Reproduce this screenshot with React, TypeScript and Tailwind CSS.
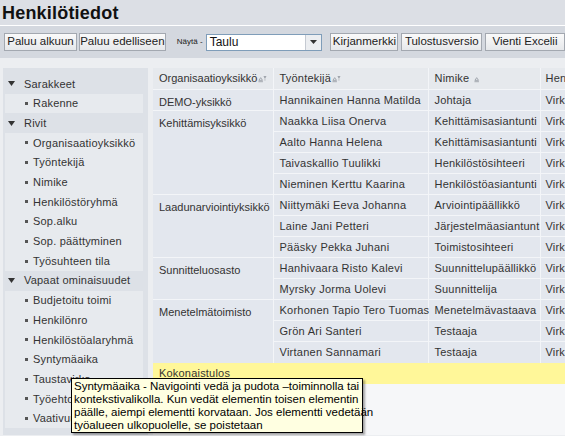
import React from 'react'

type Row = { emp: string; title: string; kind: string }
type Group = { unit: string; rows: Row[] }

const groups: Group[] = [
  { unit: 'DEMO-yksikkö', rows: [{ emp: 'Hannikainen Hanna Matilda', title: 'Johtaja', kind: 'Virka' }] },
  {
    unit: 'Kehittämisyksikkö',
    rows: [
      { emp: 'Naakka Liisa Onerva', title: 'Kehittämisasiantunti', kind: 'Virka' },
      { emp: 'Aalto Hanna Helena', title: 'Kehittämisasiantunti', kind: 'Virka' },
      { emp: 'Taivaskallio Tuulikki', title: 'Henkilöstösihteeri', kind: 'Virka' },
      { emp: 'Nieminen Kerttu Kaarina', title: 'Henkilöstöasiantunti', kind: 'Virka' },
    ],
  },
  {
    unit: 'Laadunarviointiyksikkö',
    rows: [
      { emp: 'Niittymäki Eeva Johanna', title: 'Arviointipäällikkö', kind: 'Virka' },
      { emp: 'Laine Jani Petteri', title: 'Järjestelmäasiantunt', kind: 'Virka' },
      { emp: 'Pääsky Pekka Juhani', title: 'Toimistosihteeri', kind: 'Virka' },
    ],
  },
  {
    unit: 'Sunnitteluosasto',
    rows: [
      { emp: 'Hanhivaara Risto Kalevi', title: 'Suunnittelupäällikkö', kind: 'Virka' },
      { emp: 'Myrsky Jorma Uolevi', title: 'Suunnittelija', kind: 'Virka' },
    ],
  },
  {
    unit: 'Menetelmätoimisto',
    rows: [
      { emp: 'Korhonen Tapio Tero Tuomas', title: 'Menetelmävastaava', kind: 'Virka' },
      { emp: 'Grön Ari Santeri', title: 'Testaaja', kind: 'Virka' },
      { emp: 'Virtanen Sannamari', title: 'Testaaja', kind: 'Virka' },
    ],
  },
]

const sections = [
  { name: 'Sarakkeet', items: ['Rakenne'] },
  {
    name: 'Rivit',
    items: ['Organisaatioyksikkö', 'Työntekijä', 'Nimike', 'Henkilöstöryhmä', 'Sop.alku', 'Sop. päättyminen', 'Työsuhteen tila'],
  },
  {
    name: 'Vapaat ominaisuudet',
    items: ['Budjetoitu toimi', 'Henkilönro', 'Henkilöstöalaryhmä', 'Syntymäaika', 'Taustavirka', 'Työehtosopimus', 'Vaativuusryhmä'],
  },
]

function SortIcon({ filter = true }: { filter?: boolean }) {
  return (
    <svg width="9" height="8" viewBox="0 0 10 8" className="ml-[1px] inline-block">
      <path d="M1 5.5 L3 2.5 L5 5.5 Z" fill="none" stroke="#8a8f98" strokeWidth="0.8" />
      <line x1="0.5" y1="7" x2="5.5" y2="7" stroke="#8a8f98" strokeWidth="0.8" />
      {filter && <path d="M6 1 H9.5 L8 3 V6 H7.5 V3 Z" fill="#8a8f98" />}
    </svg>
  )
}

function Btn({ label, w }: { label: string; w: string }) {
  return (
    <button
      className={`${w} h-[18px] shrink-0 border border-[#a3a8b0] bg-gradient-to-b from-[#fafafa] to-[#e6e8eb] text-[11.5px] text-[#222] leading-none px-0`}
    >
      {label}
    </button>
  )
}

export default function App() {
  return (
    <div className="relative w-[565px] h-[436px] overflow-hidden bg-[#eceef1] font-['Liberation_Sans',Arial,sans-serif] text-[#333]">
      {/* Title */}
      <div className="h-[26px] bg-[#dcdfe5] px-[2px] text-[18px] font-bold leading-[26px] text-[#111] tracking-[0.2px] border-b border-white">
        Henkilötiedot
      </div>

      {/* Toolbar */}
      <div className="h-[32px] bg-[#d4d8df] flex items-center pl-[4px] whitespace-nowrap">
        <Btn label="Paluu alkuun" w="w-[73px]" />
        <div className="w-[2px]" />
        <Btn label="Paluu edelliseen" w="w-[87px]" />
        <span className="ml-[11px] text-[8px] text-[#222] mr-[3px]">Näytä -</span>
        <div className="flex h-[17px] w-[127px] border border-[#7f9db9] bg-white">
          <span className="flex-1 text-[12px] leading-[15px] pl-[3px] text-[#111]">Taulu</span>
          <span className="w-[16px] flex items-center justify-center bg-[#eceef1] border-l border-[#c5cad2]">
            <svg width="7" height="4" viewBox="0 0 7 4"><path d="M0 0 H7 L3.5 4 Z" fill="#333" /></svg>
          </span>
        </div>
        <div className="w-[9px]" />
        <Btn label="Kirjanmerkki" w="w-[68px]" />
        <div className="w-[3px]" />
        <Btn label="Tulostusversio" w="w-[81px]" />
        <div className="w-[3px]" />
        <Btn label="Vienti Excelii" w="w-[80px]" />
      </div>

      {/* Main */}
      <div className="flex pt-[10px] pl-[3px] gap-[5px] h-[377px]">
        {/* Sidebar */}
        <div className="w-[145px] shrink-0 bg-[#dde1e7] pt-[6px] text-[11px]">
          {sections.map(s => (
            <div key={s.name}>
              <div className="h-[19.7px] flex items-center pl-[5px]">
                <svg width="7" height="5" viewBox="0 0 7 5" className="mr-[9px]"><path d="M0 0 H7 L3.5 5 Z" fill="#333" /></svg>
                <span className="tracking-[0.2px]">{s.name}</span>
              </div>
              <div className="ml-[2px] mr-[5px] bg-[#e7eaee]">
                {s.items.map(it => (
                  <div key={it} className="h-[19.7px] flex items-center pl-[20px]">
                    <span className="w-[3px] h-[3px] bg-[#555] mr-[5px]" />
                    <span className="tracking-[0.2px]">{it}</span>
                  </div>
                ))}
              </div>
            </div>
          ))}
        </div>

        {/* Table */}
        <div className="flex-1 min-w-0 overflow-hidden bg-[#f6f7f9] text-[11px]">
          <table className="border-collapse table-fixed w-[460px]">
            <colgroup>
              <col className="w-[120px]" />
              <col className="w-[155px]" />
              <col className="w-[112px]" />
              <col className="w-[73px]" />
            </colgroup>
            <thead>
              <tr className="h-[21px] bg-[#e6e9ed] text-left">
                <th className="font-normal pl-[6px] whitespace-nowrap">Organisaatioyksikkö<SortIcon /></th>
                <th className="font-normal pl-[6px] whitespace-nowrap border-l border-[#f3f5f8] tracking-[0.2px]">Työntekijä<SortIcon /></th>
                <th className="font-normal pl-[6px] whitespace-nowrap border-l border-[#f3f5f8] tracking-[0.2px]">Nimike <SortIcon filter={false} /></th>
                <th className="font-normal pl-[5px] whitespace-nowrap border-l border-[#f3f5f8] tracking-[0.2px]">Henkilöstöryhmä</th>
              </tr>
            </thead>
            <tbody>
              {groups.map(g =>
                g.rows.map((r, i) => (
                  <tr key={r.emp} className="h-[21px] bg-[#e3e7ee]">
                    {i === 0 && (
                      <td rowSpan={g.rows.length} className="align-top pt-[4px] pl-[6px] whitespace-nowrap border-t border-[#f3f5f8]">
                        {g.unit}
                      </td>
                    )}
                    <td className="pl-[6px] whitespace-nowrap border-t border-l border-[#f3f5f8] tracking-[0.25px]">{r.emp}</td>
                    <td className="pl-[6px] whitespace-nowrap overflow-hidden border-t border-l border-[#f3f5f8] tracking-[0.2px]">{r.title}</td>
                    <td className="pl-[5px] whitespace-nowrap border-t border-l border-[#f3f5f8] tracking-[0.2px]">{r.kind}</td>
                  </tr>
                ))
              )}
              <tr className="h-[21px] bg-[#fff799]">
                <td colSpan={4} className="pl-[6px] pt-[2px] align-top tracking-[0.2px]">Kokonaistulos</td>
              </tr>
            </tbody>
          </table>
        </div>
      </div>

      {/* Tooltip */}
      <div className="absolute left-[71px] top-[378px] w-[292px] h-[55px] border border-black bg-[#ffffe1] text-black text-[11.5px] leading-[13px] px-[2px] pt-[1px] shadow-[2px_2px_2px_rgba(0,0,0,0.35)] whitespace-nowrap">
        Syntymäaika - Navigointi vedä ja pudota –toiminnolla tai<br />
        kontekstivalikolla. Kun vedät elementin toisen elementin<br />
        päälle, aiempi elementti korvataan. Jos elementti vedetään<br />
        työalueen ulkopuolelle, se poistetaan
      </div>
    </div>
  )
}
